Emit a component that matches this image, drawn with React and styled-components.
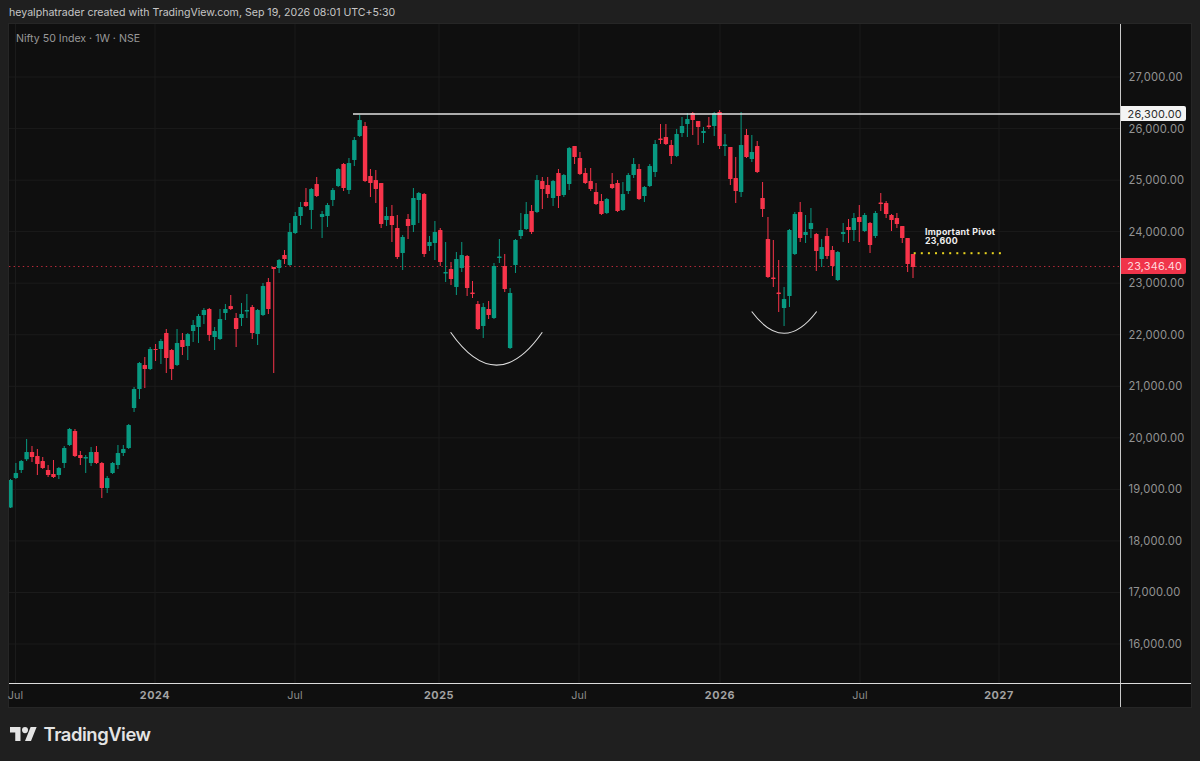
import React from 'react';
import styled, { createGlobalStyle } from 'styled-components';

const Global = createGlobalStyle`
  html, body { margin: 0; padding: 0; background: #1f1f1f; }
  body { font-family: Inter, "Liberation Sans", sans-serif; -webkit-font-smoothing: antialiased; }
`;

const Page = styled.div`
  width: 1200px;
  height: 761px;
  background: #1f1f1f;
  display: flex;
  flex-direction: column;
  overflow: hidden;
`;
const Header = styled.header`
  height: 24px;
  padding: 0 9px;
  display: flex;
  align-items: center;
  box-sizing: border-box;
  color: #c6c6c6;
  font-size: 10.6px;
  white-space: nowrap;
`;
const Panel = styled.main`
  margin: 0 9px;
  height: 683px;
  display: grid;
  grid-template-columns: 1111px 71px;
  grid-template-rows: 659px 24px;
  background: #0f0f0f;
  box-shadow: 0 0 0 1px #262626;
`;
const Plot = styled.div`
  position: relative;
  border-right: 1.5px solid #c9c9c9;
  border-bottom: 1.5px solid #dcdcdc;
  box-sizing: content-box;
  width: 1111px;
  height: 659px;
  margin-bottom: -1.5px;
  overflow: hidden;
`;
const ChartSvg = styled.svg`
  display: block;
  width: 1111px;
  height: 659px;
`;
const Legend = styled.div`
  position: absolute;
  left: 7px;
  top: 8px;
  color: #989898;
  font-size: 10.6px;
  line-height: 13px;
`;
const Note = styled.div`
  position: absolute;
  left: 916px;
  top: 202.5px;
  color: #eeeeee;
  font-size: 8.8px;
  font-weight: 700;
  line-height: 9.2px;
  letter-spacing: 0.28px;
  white-space: nowrap;
`;
const PriceAxis = styled.aside`
  position: relative;
  padding-top: 27.2px;
  box-sizing: border-box;
  border-left: 1.5px solid #c9c9c9;
  display: flex;
  flex-direction: column;
`;
const PriceRow = styled.div`
  flex: 0 0 51.55px;
  display: flex;
  align-items: center;
  padding-left: 7.5px;
  color: #939393;
  font-size: 11.2px;
  letter-spacing: 0.18px;
`;
const PriceTag = styled.div`
  position: absolute;
  left: 0;
  top: ${p => p.$top}px;
  width: 64.5px;
  height: ${p => p.$h}px;
  box-sizing: border-box;
  padding-left: 3px;
  display: flex;
  align-items: center;
  justify-content: center;
  background: ${p => p.$bg};
  color: ${p => p.$fg};
  border-radius: 0 2px 2px 0;
  font-size: 10.9px;
  letter-spacing: 0.18px;
`;
const TimeAxis = styled.div`
  display: flex;
  align-items: center;
  height: 24px;
  grid-column: 1;
`;
const Corner = styled.div`
  grid-column: 2;
  border-left: 1.5px solid #c9c9c9;
  border-top: 1.5px solid #dcdcdc;
`;
const Tick = styled.span`
  flex: 0 0 0;
  width: 0;
  min-width: 0;
  margin-left: ${p => p.$gap}px;
  display: flex;
  justify-content: center;
  white-space: nowrap;
  color: ${p => (p.$year ? '#a3a3a3' : '#8c8c8c')};
  font-size: 10.8px;
  font-weight: ${p => (p.$year ? 700 : 400)};
  letter-spacing: ${p => (p.$year ? '0.6px' : '0.2px')};
`;
const Footer = styled.footer`
  flex: 1;
  display: flex;
  align-items: center;
  gap: 6.5px;
  padding: 0 0 0 10px;
`;
const LogoMark = styled.svg`
  width: 27px;
  height: 14px;
  fill: #e4e4e4;
  display: block;
`;
const WordMark = styled.span`
  color: #e4e4e4;
  font-size: 18.4px;
  font-weight: 600;
  letter-spacing: -0.45px;
  line-height: 24px;
`;

const prices = ['27,000.00','26,000.00','25,000.00','24,000.00','23,000.00','22,000.00','21,000.00','20,000.00','19,000.00','18,000.00','17,000.00','16,000.00'];
const priceYs = prices.map((_, i) => 77 + i * 51.55);
const ticks = [
  { c: 15.5, t: 'Jul' }, { c: 155, t: '2024', y: 1 }, { c: 295, t: 'Jul' }, { c: 439, t: '2025', y: 1 },
  { c: 579, t: 'Jul' }, { c: 720, t: '2026', y: 1 }, { c: 860, t: 'Jul' }, { c: 999, t: '2027', y: 1 },
];

// [up, wickTop, bodyTop, bodyBottom, wickBottom] in page pixels, one row per week
const candles = [
[1,479,480,507.5,508],[1,463,473,478,479],[1,460,461,470,473],[1,439,452,459.3,461],[0,446,452,457,462],
[0,449,456,464,475],[0,457,461,468,469],[0,465,470,475,477],[0,460,474,477,478],[1,467,468,475,479],
[1,446,448,463,468],[1,428,429,445,446],[0,429,431,456,457],[0,451,455,458,465],[1,455,457,458.5,473],
[1,447,452,463,466],[0,446,452,463,464],[0,462,463,488,498],[1,476,478,488,493],[1,462,463,473,474],
[1,445,453,465,469],[1,445,449,453,456],[1,424,425,448,449],[1,387,389,408,412],[1,362,363,389,399],
[0,357,365,369,388],[1,347,349,369,370],[0,344,349,350,361],[1,339,341,349,364],[0,329,333,358,373],
[0,349,350,369,380],[1,329,343,365,366],[0,333,340,347,355],[1,333,334,346,360],[1,320,325,331,342],
[1,314,316,327,343],[1,308,310,315,324],[0,308,309,335,341],[1,327,331,337,350],[1,309,319,339,340],
[1,304,309,313,320],[0,295,306,309,310],[0,313,318,329,347],[1,303,314,318,326],[1,294,310,311.5,318],
[0,305,307,333,339],[1,309,310,334,345],[1,283,286,315,316],[0,278,282,309,314],[0,267,267,269,373],
[1,259,260,268,273],[0,250,255,259,264],[1,223,232,265,266],[1,212,216,233,234],[1,202,207,216,225],
[0,188,202,206,207],[1,188,189,210,229],[0,177,184,196,197],[1,211,214,217,238],[1,203,205,216,227],
[1,188,190,200,206],[1,168,169,186,187],[0,163,164,188,191],[1,158,163,190,194],[1,137,140,160,166],
[1,115,120,136,137],[0,122,126,181,182],[0,169,176,183,197],[0,170,180,189,203],[0,183,183,224,228],
[1,207,216,220,226],[0,205,216,225,242],[0,215,228,257,259],[1,235,237,253,270],[0,214,219,226,239],
[1,188,198,225,232],[1,192,193,200,223],[0,193,194,254,257],[1,236,242,246,251],[1,221,232,243,260],
[0,228,230,262,266],[1,242,272,273.5,282],[0,262,269,279,285],[1,252,259,287,295],[1,242,255,268,272],
[0,255,256,288,296],[0,281,292.5,294,298],[0,301,304,329,330],[1,303,307,326,338],[0,301,309,315,319],
[1,263,266,318,319],[1,239,256.5,258,263],[0,254,266,289,292],[1,288,293,348,349],[1,239,240,265,273],
[1,213,230,236,239],[1,202,214,229,230],[0,205,211,232,234],[1,175,180,212,213],[0,177,181,189,209],
[0,177,185,194,198],[1,180,181,198,206],[0,169,173,196,208],[1,174,175,195,197],[1,147,148,184,190],
[0,146,146,157,164],[0,152,158,174,175],[0,168,173,183,184],[0,168,181,189,191],[0,183,192,204,205],
[0,194,201,214,215],[1,198,199,213,214],[0,173,184,188,189],[0,180,183,211,212],[1,182,194,210,211],
[1,173,175,191,194],[1,158,164,175,178],[0,164,169,199,200],[1,186,187,196,202],[1,164,166,186,187],
[1,140,144,172,177],[0,124,138.5,140,144],[0,124,137,144,145],[0,140,145,156,164],[1,129,134,156,157],
[1,117,126,133,137],[1,113,119,124,137],[0,112,113,120,135],[0,121,121,127,145],[1,127,131,133,143],
[0,117,125.5,127,129],[1,112,113,126,136],[0,110,112,146,149],[1,134,144.5,146,156],[0,147,147,179,185],
[0,157,178,191,203],[1,112,145,192,197],[0,129,135,157,158],[1,135,152,159,162],[0,141,146,172,173],
[0,182,198,209,217],[0,217,239,277,278],[0,240,277.5,279,287],[0,260,292.5,294,312],[1,287,299,308,326],
[1,229,230,296,307],[1,212,214,254,255],[0,202,212,238,242],[1,215,232,235,243],[1,208,223,229,238],
[0,233,234,251,271],[1,239,247,259,267],[0,228,236,256,259],[0,246,250,266,276],[1,251,252,280,281],
[1,223,232,234,242],[0,219,227,230,243],[1,213,218,230,241],[0,205,217,222,242],[1,213,215,231,232],
[0,222,223,245,253],[1,211,213,236,238],[0,193,202.5,204,211],[0,201,203,214,218],[0,214,215,220,231],
[0,213,218,224,228],[0,226,226,238,243],[0,238,238,264,272],[0,254,254,267,278],
];
const step = (913 - 10.5) / (candles.length - 1);
const GREEN = '#089981';
const RED = '#f7344a';

const Candle = ({ d, i }) => {
  const [up, wt, bt, bb, wb] = d;
  const x = 10.5 + step * i;
  const fill = up ? GREEN : RED;
  return (
    <g fill={fill}>
      <rect x={x - 0.5} y={wt} width="1" height={wb - wt} />
      <rect x={x - 2.2} y={bt} width="4.4" height={Math.max(bb - bt, 1)} rx="0.5" />
    </g>
  );
};

const yellowDots = Array.from({ length: 13 }, (_, i) => 913.7 + i * 7.1);

export default function App() {
  return (
    <Page>
      <Global />
      <Header>heyalphatrader created with TradingView.com, Sep 19, 2026 08:01 UTC+5:30</Header>
      <Panel>
        <Plot>
          <ChartSvg viewBox="9 24 1111 659">
            {priceYs.map(y => (
              <line key={y} x1="9" x2="1120" y1={y} y2={y} stroke="#1b1b1b" strokeWidth="1" />
            ))}
            {ticks.map(t => (
              <line key={t.c} x1={t.c} x2={t.c} y1="24" y2="683" stroke="#1b1b1b" strokeWidth="1" />
            ))}
            <line x1="9" x2="1120" y1="266.5" y2="266.5" stroke="#b92a3a" strokeWidth="1" strokeDasharray="1.4 3.2" />
            {candles.map((d, i) => <Candle key={i} d={d} i={i} />)}
            <line x1="353" x2="1120" y1="114" y2="114" stroke="#e2e2e2" strokeWidth="1.4" />
            <path d="M450.6 332.3 Q496.5 398 542.3 332.3" fill="none" stroke="#dedede" strokeWidth="1.1" />
            <path d="M751.7 311.5 Q784 355 816.7 311.5" fill="none" stroke="#dedede" strokeWidth="1.1" />
            {yellowDots.map(x => (
              <rect key={x} x={x} y="252.2" width="2" height="2" fill="#e9d41f" />
            ))}
          </ChartSvg>
          <Legend>Nifty 50 Index · 1W · NSE</Legend>
          <Note>Important Pivot<br />23,600</Note>
        </Plot>
        <PriceAxis>
          {prices.map(p => <PriceRow key={p}>{p}</PriceRow>)}
          <PriceTag $top={82} $h={15} $bg="#f4f4f4" $fg="#2a2a2a">26,300.00</PriceTag>
          <PriceTag $top={234.3} $h={15.4} $bg="#f0344a" $fg="#ffd9dd">23,346.40</PriceTag>
        </PriceAxis>
        <TimeAxis>
          {ticks.map((t, i) => (
            <Tick key={t.c} $year={t.y} $gap={i === 0 ? 6.5 : t.c - ticks[i - 1].c}>{t.t}</Tick>
          ))}
        </TimeAxis>
        <Corner />
      </Panel>
      <Footer>
        <LogoMark viewBox="0 4 36 18" preserveAspectRatio="none">
          <path d="M14 22H7V11H0V4h14v18zM28 22h-8l7.5-18h8L28 22z" />
          <circle cx="20" cy="8" r="4" />
        </LogoMark>
        <WordMark>TradingView</WordMark>
      </Footer>
    </Page>
  );
}
